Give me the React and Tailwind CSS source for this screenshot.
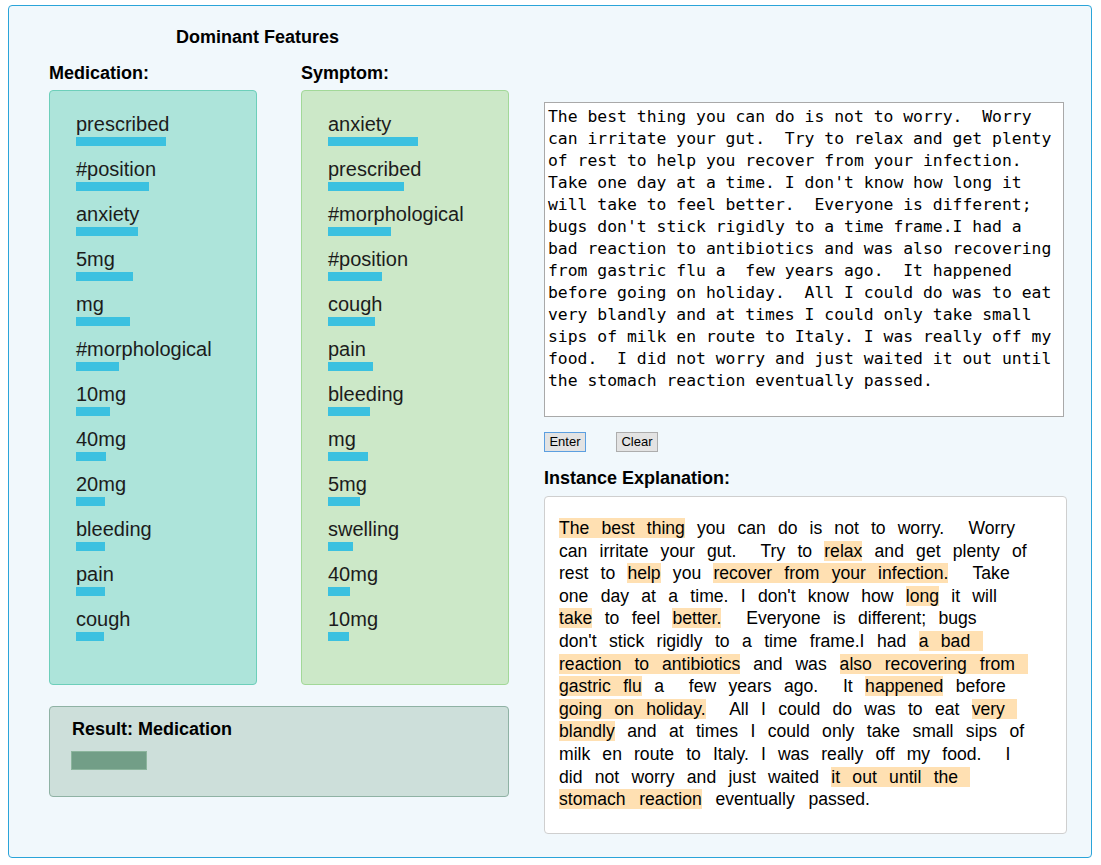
import React from "react";

const medication = [
  ["prescribed", 90],
  ["#position", 73],
  ["anxiety", 62],
  ["5mg", 57],
  ["mg", 54],
  ["#morphological", 43],
  ["10mg", 34],
  ["40mg", 30],
  ["20mg", 29],
  ["bleeding", 29],
  ["pain", 29],
  ["cough", 28],
];

const symptom = [
  ["anxiety", 90],
  ["prescribed", 76],
  ["#morphological", 63],
  ["#position", 54],
  ["cough", 47],
  ["pain", 45],
  ["bleeding", 42],
  ["mg", 40],
  ["5mg", 32],
  ["swelling", 25],
  ["40mg", 22],
  ["10mg", 21],
];

const inputText =
  "The best thing you can do is not to worry.  Worry can irritate your gut.  Try to relax and get plenty of rest to help you recover from your infection.  Take one day at a time. I don't know how long it will take to feel better.  Everyone is different; bugs don't stick rigidly to a time frame.I had a bad reaction to antibiotics and was also recovering from gastric flu a  few years ago.  It happened before going on holiday.  All I could do was to eat very blandly and at times I could only take small sips of milk en route to Italy. I was really off my food.  I did not worry and just waited it out until the stomach reaction eventually passed.";

function H({ children }) {
  return <span className="bg-[#ffe0b2]">{children}</span>;
}

function FeaturePanel({ label, items, panelClass }) {
  return (
    <div className="w-[208px]">
      <div className="text-[18px] font-bold leading-[21px] text-black">{label}</div>
      <div className={"mt-[6px] h-[595px] rounded-[4px] border pl-[26px] pt-[21px] " + panelClass}>
        <div className="flex flex-col gap-[11px]">
          {items.map(([name, w]) => (
            <div key={name} className="flex flex-col">
              <div className="text-[20px] leading-[25px] text-[#1c1c1c]">{name}</div>
              <div className="h-[9px] bg-[#3bc1e0]" style={{ width: w }} />
            </div>
          ))}
        </div>
      </div>
    </div>
  );
}

export default function App() {
  return (
    <div className="bg-white min-h-[865px] pt-[5px] pl-2 font-['Liberation_Sans',Arial,sans-serif]">
      <div className="flex h-[853px] w-[1084px] rounded-[4px] border border-[#2ba4d9] bg-[#f1f8fc] pl-[40px]">
        {/* left column */}
        <div className="w-[460px] pt-[21px]">
          <div className="pl-[127px] text-[18px] font-bold leading-[21px] text-black">Dominant Features</div>
          <div className="mt-[15px] flex gap-[44px]">
            <FeaturePanel
              label="Medication:"
              items={medication}
              panelClass="bg-[#ade4da] border-[#6dcfba]"
            />
            <FeaturePanel
              label="Symptom:"
              items={symptom}
              panelClass="bg-[#cce8c8] border-[#a2d898]"
            />
          </div>
          <div className="mt-[21px] h-[91px] rounded-[4px] border border-[#8fb2a4] bg-[#cddfda] pl-[21px] pt-[12px]">
            <div className="pl-px text-[18px] font-bold leading-[21px] text-black">Result: Medication</div>
            <div className="mt-[11px] h-[19px] w-[76px] border border-[#8cb59d] bg-[#729e87]" />
          </div>
        </div>

        {/* right column */}
        <div className="ml-[35px] w-[523px] pt-[96px]">
          <textarea
            defaultValue={inputText}
            spellCheck={false}
            className="block h-[315px] w-[520px] resize-none overflow-hidden border border-[#a9a9a9] bg-white pb-0 pl-[3px] pr-[6px] pt-[3px] font-['DejaVu_Sans_Mono',monospace] text-[16.4px] leading-[22px] text-black outline-none"
          />
          <div className="mt-[15px] flex gap-[30px]">
            <button className="h-[20px] w-[42px] border border-[#5c9fe0] bg-[#e3e3e3] text-[13px] leading-[18px] text-black">
              Enter
            </button>
            <button className="h-[20px] w-[42px] border border-[#adadad] bg-[#e3e3e3] text-[13px] leading-[18px] text-black">
              Clear
            </button>
          </div>
          <div className="mt-[16px] text-[18px] font-bold leading-[21px] text-black">Instance Explanation:</div>
          <div className="mt-[7px] w-[523px] rounded-[4px] border border-[#cfcfcf] bg-white pb-[22px] pl-[14px] pt-[20px] text-[17.6px] leading-[22.6px] text-black">
            <div className="whitespace-pre [word-spacing:7.2px]"><H>The best thing</H> you can do is not to worry.  Worry</div>
            <div className="whitespace-pre [word-spacing:7.3px]">can irritate your gut.  Try to <H>relax</H> and get plenty of</div>
            <div className="whitespace-pre [word-spacing:7.3px]">rest to <H>help</H> you <H>recover from your infection.</H>  Take</div>
            <div className="whitespace-pre [word-spacing:7.4px]">one day at a time. I don't know how <H>long</H> it will</div>
            <div className="whitespace-pre [word-spacing:7.5px]"><H>take</H> to feel <H>better.</H>  Everyone is different; bugs</div>
            <div className="whitespace-pre [word-spacing:7.5px]">don't stick rigidly to a time frame.I had <H>a bad </H></div>
            <div className="whitespace-pre [word-spacing:8px]"><H>reaction to antibiotics</H> and was <H>also recovering from </H></div>
            <div className="whitespace-pre [word-spacing:7.5px]"><H>gastric flu</H> a  few years ago.  It <H>happened</H> before</div>
            <div className="whitespace-pre [word-spacing:7.4px]"><H>going on holiday.</H>  All I could do was to eat <H>very </H></div>
            <div className="whitespace-pre [word-spacing:7.5px]"><H>blandly</H> and at times I could only take small sips of</div>
            <div className="whitespace-pre [word-spacing:7.2px]">milk en route to Italy. I was really off my food.  I</div>
            <div className="whitespace-pre [word-spacing:7.4px]">did not worry and just waited <H>it out until the </H></div>
            <div className="whitespace-pre [word-spacing:8.8px]"><H>stomach reaction</H> eventually passed.</div>
          </div>
        </div>
      </div>
    </div>
  );
}
